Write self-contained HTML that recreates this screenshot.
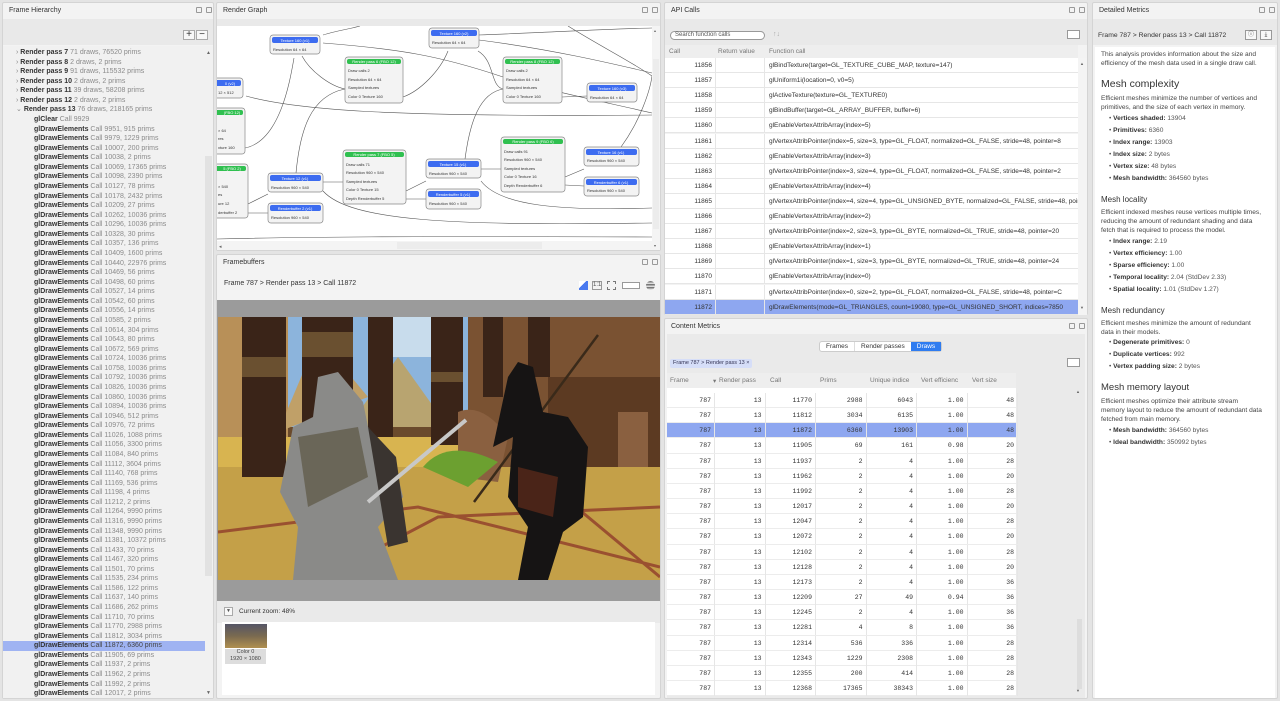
<!DOCTYPE html>
<html><head><meta charset="utf-8"><style>
*{box-sizing:border-box;margin:0;padding:0}
body{width:1280px;height:701px;background:#e4e4e4;font-family:"Liberation Sans",sans-serif;font-size:7px;color:#333;position:relative;overflow:hidden}
.p{position:absolute;background:#f3f3f3;border:1px solid #d4d4d4;border-radius:2px}
.t{position:absolute;left:6px;top:4px;font-size:7px;color:#333}
.ic{position:absolute;top:4px;width:6px;height:6px;border:1px solid #999;border-radius:1px}
.a{position:absolute;white-space:nowrap}
.fh{position:absolute;left:0;width:200px;height:9.57px;line-height:9.57px;font-size:7px;white-space:nowrap}
.fh b{color:#333}
.fh span{color:#8a8a8a}
.row{position:absolute;left:0;height:15.1px;line-height:15px;border-bottom:1px solid #e6e6e6;background:#fff;font-size:6.5px}
.mono{font-family:"Liberation Mono",monospace;font-size:6.5px}
.cm{position:absolute;left:2px;width:349px;height:15.16px;line-height:15px;border-bottom:1px solid #ececec;background:#fff}
.cm i{position:absolute;font-style:normal;text-align:right;top:0}
.dm{position:absolute;left:6px;font-size:6.6px;color:#444;white-space:nowrap;line-height:9px}
.h{position:absolute;left:6px;font-size:10.5px;color:#333;white-space:nowrap}
.h2{position:absolute;left:6px;font-size:8px;color:#333;white-space:nowrap}
.bl{position:absolute;left:14px;font-size:6.6px;color:#555;white-space:nowrap}
.bl b{color:#333}
</style></head><body>

<!-- Frame Hierarchy -->
<div class="p" style="left:2px;top:2px;width:212px;height:697px">
<div class="t">Frame Hierarchy</div>
<div class="ic" style="left:193px"></div><div class="ic" style="left:203px"></div>
<div style="position:absolute;left:0;top:16px;width:210px;height:26px;background:#e9e9e9"></div>
<div style="position:absolute;left:180px;top:27px;width:12px;height:10px;border:1px solid #aaa;background:#f8f8f8;font-size:10px;line-height:8px;text-align:center">+</div>
<div style="position:absolute;left:193px;top:27px;width:12px;height:10px;border:1px solid #aaa;background:#f8f8f8;font-size:10px;line-height:8px;text-align:center">−</div>
<div style="position:absolute;left:0;top:43px;width:210px;height:652px;background:#f1f1f1">
<div style="position:absolute;left:202px;top:110px;width:7px;height:420px;background:#e2e2e2"></div>
<div style="position:absolute;left:203px;top:4px;font-size:5px;color:#666">▲</div>
<div style="position:absolute;left:203px;top:644px;font-size:5px;color:#666">▼</div>
</div>
<div id="fh" style="position:absolute;left:0;top:45px;width:210px"></div>
</div>

<!-- Render Graph -->
<div class="p" style="left:216px;top:2px;width:445px;height:249px">
<div class="t">Render Graph</div>
<div class="ic" style="left:425px"></div><div class="ic" style="left:435px"></div>
<div style="position:absolute;left:0;top:16px;width:443px;height:8px;background:#e9e9e9"></div>
<svg style="position:absolute;left:0;top:23px" width="443" height="224" viewBox="217 25 443 224" font-family="Liberation Sans" font-size="4.5">
<rect x="217" y="25" width="443" height="224" fill="#fff"/>
<g fill="none" stroke="#555" stroke-width="0.6">
<path d="M323 34 C335 30,350 28,360 25"/>
<path d="M323 42 C400 48,440 55,500 75 C540 88,600 100,652 112"/>
<path d="M302 55 C310 70,330 85,345 88"/>
<path d="M403 96 C420 90,440 70,448 50"/>
<path d="M478 34 C540 32,600 28,652 27"/>
<path d="M479 39 C550 48,610 62,652 72"/>
<path d="M478 50 C495 60,490 85,503 88"/>
<path d="M562 96 L587 95"/>
<path d="M246 95 C300 110,400 116,652 114"/>
<path d="M245 147 C280 140,290 80,294 57"/>
<path d="M296 172 C300 130,310 95,345 88"/>
<path d="M465 158 C470 120,480 92,503 88"/>
<path d="M248 203 L268 193"/>
<path d="M248 212 L268 212"/>
<path d="M323 181 L343 181"/>
<path d="M406 190 L426 180"/>
<path d="M406 198 L426 198"/>
<path d="M481 168 L501 168"/>
<path d="M565 176 L584 168"/>
<path d="M565 184 L584 185"/>
<path d="M621 146 C640 120,650 90,652 75"/>
<path d="M323 190 C350 220,450 225,652 222"/>
<path d="M481 180 C500 205,560 210,652 207"/>
<path d="M217 238 C300 236,400 235,652 236"/>
<path d="M568 25 C600 45,630 60,652 75"/>
</g>
<g fill="#f3f3f3" stroke="#888" stroke-width="0.7">
<rect x="270" y="34" width="50" height="19" rx="3"/><rect x="345" y="56" width="58" height="46" rx="3"/>
<rect x="429" y="27" width="50" height="20" rx="3"/><rect x="503" y="56" width="59" height="46" rx="3"/>
<rect x="587" y="82" width="50" height="19" rx="3"/><rect x="210" y="77" width="33" height="20" rx="3"/>
<rect x="210" y="107" width="35" height="46" rx="3"/><rect x="210" y="163" width="38" height="54" rx="3"/>
<rect x="268" y="172" width="55" height="19" rx="3"/><rect x="268" y="202" width="55" height="20" rx="3"/>
<rect x="343" y="149" width="63" height="54" rx="3"/><rect x="426" y="158" width="55" height="19" rx="3"/>
<rect x="426" y="188" width="55" height="20" rx="3"/><rect x="501" y="136" width="64" height="55" rx="3"/>
<rect x="584" y="146" width="55" height="19" rx="3"/><rect x="584" y="176" width="55" height="19" rx="3"/>
</g>
<g fill="#3d6cf0"><rect x="272" y="36" width="46" height="6" rx="2"/><rect x="431" y="29" width="46" height="6" rx="2"/>
<rect x="589" y="84" width="46" height="6" rx="2"/><rect x="210" y="79" width="31" height="6" rx="2"/>
<rect x="270" y="174" width="51" height="6" rx="2"/><rect x="270" y="204" width="51" height="6" rx="2"/>
<rect x="428" y="160" width="51" height="6" rx="2"/><rect x="428" y="190" width="51" height="6" rx="2"/>
<rect x="586" y="148" width="51" height="6" rx="2"/><rect x="586" y="178" width="51" height="6" rx="2"/></g>
<g fill="#30c050"><rect x="347" y="58" width="54" height="5" rx="2"/><rect x="505" y="58" width="55" height="5" rx="2"/>
<rect x="210" y="109" width="33" height="5" rx="2"/><rect x="210" y="165" width="36" height="5" rx="2"/>
<rect x="345" y="151" width="59" height="5" rx="2"/><rect x="503" y="138" width="60" height="5" rx="2"/></g>
<g fill="#fff" font-size="4" text-anchor="middle">
<text x="295" y="41">Texture 160 (v1)</text><text x="454" y="34">Texture 160 (v2)</text><text x="612" y="89">Texture 160 (v3)</text>
<text x="295" y="179">Texture 12 (v1)</text><text x="295" y="209">Renderbuffer 2 (v1)</text>
<text x="453" y="165">Texture 15 (v1)</text><text x="453" y="195">Renderbuffer 5 (v1)</text>
<text x="611" y="153">Texture 16 (v1)</text><text x="611" y="183">Renderbuffer 6 (v1)</text>
<text x="374" y="62">Render pass 6 (FBO 12)</text><text x="532" y="62">Render pass 8 (FBO 12)</text>
<text x="374" y="155">Render pass 7 (FBO 5)</text><text x="533" y="142">Render pass 9 (FBO 6)</text>
<text x="230" y="84">0 (v2)</text><text x="232" y="113">(FBO 12)</text><text x="232" y="169">5 (FBO 2)</text></g>
<g fill="#333" font-size="4">
<text x="273" y="50">Resolution  64 × 64</text><text x="432" y="43">Resolution  64 × 64</text><text x="590" y="98">Resolution  64 × 64</text>
<text x="271" y="188">Resolution  960 × 540</text><text x="271" y="218">Resolution  960 × 540</text>
<text x="429" y="174">Resolution  960 × 540</text><text x="429" y="204">Resolution  960 × 540</text>
<text x="587" y="161">Resolution  960 × 540</text><text x="587" y="191">Resolution  960 × 540</text>
<text x="348" y="71">Draw calls   2</text><text x="348" y="80">Resolution  64 × 64</text><text x="348" y="88">Sampled textures</text><text x="348" y="97">Color 0      Texture 160</text>
<text x="506" y="71">Draw calls   2</text><text x="506" y="80">Resolution  64 × 64</text><text x="506" y="88">Sampled textures</text><text x="506" y="97">Color 0      Texture 160</text>
<text x="346" y="165">Draw calls   71</text><text x="346" y="173">Resolution  960 × 540</text><text x="346" y="182">Sampled textures</text><text x="346" y="190">Color 0      Texture 15</text><text x="346" y="199">Depth        Renderbuffer 5</text>
<text x="504" y="152">Draw calls   91</text><text x="504" y="160">Resolution  960 × 540</text><text x="504" y="169">Sampled textures</text><text x="504" y="177">Color 0      Texture 16</text><text x="504" y="186">Depth        Renderbuffer 6</text>
<text x="218" y="93">12 × 512</text><text x="218" y="131">× 64</text><text x="218" y="139">res</text><text x="218" y="148">xture 160</text>
<text x="218" y="187">× 540</text><text x="218" y="195">es</text><text x="218" y="204">ure 12</text><text x="218" y="213">derbuffer 2</text></g>
<rect x="652" y="25" width="8" height="215" fill="#f4f4f4"/><rect x="653" y="58" width="6" height="170" fill="#ececec"/>
<rect x="217" y="240" width="443" height="9" fill="#f4f4f4"/><rect x="397" y="241" width="145" height="7" fill="#ececec"/>
<text x="219" y="247" font-size="5" fill="#666">◂</text><text x="654" y="246" font-size="4" fill="#666">▾</text><text x="654" y="31" font-size="4" fill="#666">▴</text>
</svg>
</div>

<!-- Framebuffers -->
<div class="p" style="left:216px;top:254px;width:445px;height:445px">
<div class="t">Framebuffers</div>
<div class="ic" style="left:425px"></div><div class="ic" style="left:435px"></div>
<div class="a" style="left:7px;top:25px;font-size:7px;color:#333">Frame 787 &gt; Render pass 13 &gt; Call 11872</div>
<div class="a" style="left:362px;top:26px;width:9px;height:9px;background:linear-gradient(135deg,#fff 40%,#4a7af0 40%)"></div>
<div class="a" style="left:375px;top:26px;width:10px;height:9px;border:1px solid #999;font-size:6px;line-height:7px;text-align:center;color:#555">1:1</div>
<div class="a" style="left:390px;top:26px;width:9px;height:9px;border:1.5px dashed #777"></div>
<div class="a" style="left:405px;top:27px;width:18px;height:7px;border:1px solid #999;background:#fff"></div>
<div class="a" style="left:429px;top:26px;width:9px;height:9px;background:repeating-linear-gradient(#777 0 1.5px,#ddd 1.5px 3px);border-radius:50%"></div>
<div class="a" style="left:0;top:45px;width:443px;height:301px;background:#9b9b9b"></div>
<svg style="position:absolute;left:1px;top:62px" width="442" height="263" viewBox="0 0 442 263">
<rect width="442" height="263" fill="#6a4a2c"/>
<rect x="60" y="0" width="200" height="110" fill="#8cb4dc"/>
<rect x="150" y="0" width="80" height="40" fill="#c8dcec"/>
<path d="M0 0 H70 V120 H0 Z" fill="#b89058"/>
<path d="M60 115 L100 20 L150 80 Z" fill="#c0a068"/><path d="M130 110 L180 40 L230 110 Z" fill="#b8a470"/>
<rect x="250" y="0" width="192" height="175" fill="#7a5232"/>
<rect x="330" y="60" width="112" height="110" fill="#5c3a22"/><rect x="400" y="95" width="30" height="80" fill="#8a6040"/>
<rect x="0" y="120" width="250" height="40" fill="#d8b450"/>
<rect x="0" y="150" width="442" height="113" fill="#c4a048"/>
<path d="M0 215 L200 190 L442 250 M100 263 L220 200 L442 190 M340 175 L442 260" stroke="#9a5030" stroke-width="3" fill="none"/>
<g fill="#3a2418"><rect x="24" y="0" width="44" height="160"/><rect x="84" y="0" width="51" height="115"/><rect x="150" y="0" width="25" height="120"/><rect x="213" y="0" width="32" height="128"/><rect x="265" y="0" width="20" height="80"/><rect x="310" y="0" width="22" height="60"/></g>
<g fill="#6a5030"><rect x="24" y="40" width="44" height="20"/><rect x="84" y="15" width="51" height="25"/><rect x="213" y="55" width="32" height="10"/></g>
<path d="M240 95 Q265 85 290 120 L280 165 L240 160 Z" fill="#8a6040"/>
<path d="M205 150 Q230 120 280 145 L250 170 Z" fill="#6ca030"/>
<path d="M62 175 L75 110 L95 100 L100 60 L120 55 L145 85 L150 110 L175 140 L185 180 L160 210 L180 263 L75 263 L80 210 Z" fill="#8a8a88"/>
<path d="M80 120 L140 110 L150 160 L90 190 Z" fill="#6a6658"/>
<path d="M150 110 L178 140 L190 225 L170 230 Z" fill="#3a3430"/>
<path d="M150 185 L248 103" stroke="#c8c8c8" stroke-width="4"/>
<path d="M256 185 L380 18" stroke="#3a2a1a" stroke-width="2.5"/>
<path d="M290 60 L300 45 L315 50 L325 95 L350 100 L370 130 L365 200 L345 215 L330 263 L300 263 L310 210 L290 180 L295 120 L275 130 Z" fill="#161414"/>
<path d="M300 150 L340 160 L335 200 L300 190 Z" fill="#4a2418"/>
</svg>
<div class="a" style="left:0;top:346px;width:443px;height:22px;background:#eaeaea"></div>
<div class="a" style="left:7px;top:352px;width:9px;height:9px;border:1px solid #aaa;background:#f8f8f8;font-size:5px;text-align:center;line-height:7px;color:#555">▼</div>
<div class="a" style="left:22px;top:353px;font-size:6.5px">Current zoom: 48%</div>
<div class="a" style="left:5px;top:367px;width:433px;height:73px;background:#fff"></div>
<div class="a" style="left:8px;top:369px;width:42px;height:24px;background:linear-gradient(180deg,#556 0%,#7a6a50 50%,#b09050 100%)"></div>
<div class="a" style="left:8px;top:394px;width:41px;height:15px;background:#ddd;font-size:5.5px;text-align:center;line-height:7px;color:#444">Color 0<br>1920 × 1080</div>
</div>

<!-- API Calls -->
<div class="p" style="left:664px;top:2px;width:424px;height:313px">
<div class="t">API Calls</div>
<div class="ic" style="left:404px"></div><div class="ic" style="left:414px"></div>
<div style="position:absolute;left:0;top:16px;width:422px;height:26px;background:#e9e9e9"></div>
<div class="a" style="left:5px;top:28px;width:95px;height:9px;border:1px solid #999;border-radius:5px;background:#fff;font-size:6px;line-height:7px;padding-left:4px;color:#555">Search function calls</div>
<div class="a" style="left:108px;top:28px;font-size:7px;color:#aaa">↑↓</div>
<div class="a" style="left:402px;top:27px;width:13px;height:9px;border:1px solid #999;background:#fff"></div>
<div class="a" style="left:0;top:42px;width:413px;height:13px;background:#eee;font-size:6.5px;color:#777">
<span class="a" style="left:4px;top:3px">Call</span><span class="a" style="left:53px;top:3px">Return value</span><span class="a" style="left:104px;top:3px">Function call</span></div>
<div id="api" style="position:absolute;left:0;top:55px;width:413px;height:257px;overflow:hidden"></div>
<div class="a" style="left:413px;top:55px;width:9px;height:257px;background:#f4f4f4"></div>
<div class="a" style="left:415px;top:58px;font-size:4px;color:#666">▲</div><div class="a" style="left:415px;top:302px;font-size:4px;color:#666">▼</div>
</div>

<!-- Content Metrics -->
<div class="p" style="left:664px;top:318px;width:424px;height:381px">
<div class="t">Content Metrics</div>
<div class="ic" style="left:404px"></div><div class="ic" style="left:414px"></div>
<div class="a" style="left:2px;top:15px;width:418px;height:364px;background:#eaeaea"></div>
<div class="a" style="left:154px;top:22px;height:11px;border:1px solid #ccc;border-radius:3px;background:#fff;font-size:6.5px;line-height:9px;display:flex">
<span style="padding:0 6px">Frames</span><span style="padding:0 6px;border-left:1px solid #ddd">Render passes</span><span style="padding:0 6px;background:#2f7cf0;color:#fff">Draws</span></div>
<div class="a" style="left:5px;top:40px;height:9px;background:#d6def8;border-radius:2px;font-size:5.5px;line-height:9px;padding:0 3px;color:#335">Frame 787 &gt; Render pass 13 ×</div>
<div class="a" style="left:402px;top:39px;width:13px;height:9px;border:1px solid #999;background:#fff"></div>
<div class="a" style="left:2px;top:54px;width:349px;height:15px;background:#eee;font-size:6.5px;color:#777">
<span class="a" style="left:3px;top:4px">Frame</span><span class="a" style="left:46px;top:4px">▾</span><span class="a" style="left:52px;top:4px">Render pass</span><span class="a" style="left:103px;top:4px">Call</span><span class="a" style="left:153px;top:4px">Prims</span><span class="a" style="left:203px;top:4px">Unique indice</span><span class="a" style="left:254px;top:4px">Vert efficienc</span><span class="a" style="left:305px;top:4px">Vert size</span></div>
<div class="a" style="left:2px;top:69px;width:349px;height:6px;background:#fff"></div>
<div id="cm" style="position:absolute;left:0;top:74px"></div>
<div class="a" style="left:411px;top:70px;font-size:4px;color:#666">▲</div><div class="a" style="left:411px;top:369px;font-size:4px;color:#666">▼</div>
<div class="a" style="left:412px;top:300px;width:5px;height:70px;background:#ddd"></div>
</div>

<!-- Detailed Metrics -->
<div class="p" style="left:1092px;top:2px;width:186px;height:697px">
<div class="t">Detailed Metrics</div>
<div class="ic" style="left:166px"></div><div class="ic" style="left:176px"></div>
<div style="position:absolute;left:0;top:16px;width:184px;height:26px;background:#e9e9e9"></div>
<div class="a" style="left:5px;top:29px;font-size:6.8px">Frame 787 &gt; Render pass 13 &gt; Call 11872</div>
<div class="a" style="left:152px;top:27px;width:12px;height:10px;border:1px solid #999;background:#f8f8f8;font-size:6px;text-align:center;line-height:8px">ⓘ</div>
<div class="a" style="left:167px;top:27px;width:12px;height:10px;border:1px solid #999;background:#f8f8f8;font-size:6px;text-align:center;line-height:8px">⤓</div>
<div style="position:absolute;left:2px;top:44px;width:180px;height:651px;background:#fff">
<div class="dm" style="top:3px">This analysis provides information about the size and<br>efficiency of the mesh data used in a single draw call.</div>
<div class="h" style="top:31px">Mesh complexity</div>
<div class="dm" style="top:47px">Efficient meshes minimize the number of vertices and<br>primitives, and the size of each vertex in memory.</div>
<div class="bl" style="top:68px">• <b>Vertices shaded:</b> 13904</div>
<div class="bl" style="top:80px">• <b>Primitives:</b> 6360</div>
<div class="bl" style="top:92px">• <b>Index range:</b> 13903</div>
<div class="bl" style="top:104px">• <b>Index size:</b> 2 bytes</div>
<div class="bl" style="top:116px">• <b>Vertex size:</b> 48 bytes</div>
<div class="bl" style="top:128px">• <b>Mesh bandwidth:</b> 364560 bytes</div>
<div class="h2" style="top:148px">Mesh locality</div>
<div class="dm" style="top:161px">Efficient indexed meshes reuse vertices multiple times,<br>reducing the amount of redundant shading and data<br>fetch that is required to process the model.</div>
<div class="bl" style="top:191px">• <b>Index range:</b> 2.19</div>
<div class="bl" style="top:203px">• <b>Vertex efficiency:</b> 1.00</div>
<div class="bl" style="top:215px">• <b>Sparse efficiency:</b> 1.00</div>
<div class="bl" style="top:227px">• <b>Temporal locality:</b> 2.04 (StdDev 2.33)</div>
<div class="bl" style="top:239px">• <b>Spatial locality:</b> 1.01 (StdDev 1.27)</div>
<div class="h2" style="top:259px">Mesh redundancy</div>
<div class="dm" style="top:272px">Efficient meshes minimize the amount of redundant<br>data in their models.</div>
<div class="bl" style="top:292px">• <b>Degenerate primitives:</b> 0</div>
<div class="bl" style="top:304px">• <b>Duplicate vertices:</b> 992</div>
<div class="bl" style="top:316px">• <b>Vertex padding size:</b> 2 bytes</div>
<div class="h" style="top:335px;font-size:9.5px">Mesh memory layout</div>
<div class="dm" style="top:350px">Efficient meshes optimize their attribute stream<br>memory layout to reduce the amount of redundant data<br>fetched from main memory.</div>
<div class="bl" style="top:380px">• <b>Mesh bandwidth:</b> 364560 bytes</div>
<div class="bl" style="top:392px">• <b>Ideal bandwidth:</b> 350992 bytes</div>
</div>
</div>

<script>
var fh=document.getElementById('fh'),h='';
var rp=[['7','71 draws, 76520 prims'],['8','2 draws, 2 prims'],['9','91 draws, 115532 prims'],['10','2 draws, 2 prims'],['11','39 draws, 58208 prims'],['12','2 draws, 2 prims'],['13','76 draws, 218165 prims']];
var y=0;
rp.forEach(function(r,i){h+='<div class="fh" style="top:'+y+'px;left:13px"><span>'+(i==6?'⌄':'›')+'</span> <b>Render pass '+r[0]+'</b> <span>'+r[1]+'</span></div>';y+=9.57;});
h+='<div class="fh" style="top:'+y+'px;left:31px"><b>glClear</b> <span>Call 9929</span></div>';y+=9.57;
var d=[[9951,915],[9979,1229],[10007,200],[10038,2],[10069,17365],[10098,2390],[10127,78],[10178,2432],[10209,27],[10262,10036],[10296,10036],[10328,30],[10357,136],[10409,1600],[10440,22976],[10469,56],[10498,60],[10527,14],[10542,60],[10556,14],[10585,2],[10614,304],[10643,80],[10672,569],[10724,10036],[10758,10036],[10792,10036],[10826,10036],[10860,10036],[10894,10036],[10946,512],[10976,72],[11026,1088],[11056,3300],[11084,840],[11112,3604],[11140,768],[11169,536],[11198,4],[11212,2],[11264,9990],[11316,9990],[11348,9990],[11381,10372],[11433,70],[11467,320],[11501,70],[11535,234],[11586,122],[11637,140],[11686,262],[11710,70],[11770,2988],[11812,3034],[11872,6360],[11905,69],[11937,2],[11962,2],[11992,2],[12017,2]];
d.forEach(function(r){var s=r[0]==11872;h+='<div class="fh" style="top:'+y+'px;left:0;width:202px;padding-left:31px;'+(s?'background:#9fb3f2':'')+'"><b>glDrawElements</b> <span'+(s?' style="color:#444"':'')+'>Call '+r[0]+', '+r[1]+' prims</span></div>';y+=9.57;});
fh.innerHTML=h;
var api=[[11856,'glBindTexture(target=GL_TEXTURE_CUBE_MAP, texture=147)'],[11857,'glUniform1i(location=0, v0=5)'],[11858,'glActiveTexture(texture=GL_TEXTURE0)'],[11859,'glBindBuffer(target=GL_ARRAY_BUFFER, buffer=6)'],[11860,'glEnableVertexAttribArray(index=5)'],[11861,'glVertexAttribPointer(index=5, size=3, type=GL_FLOAT, normalized=GL_FALSE, stride=48, pointer=8'],[11862,'glEnableVertexAttribArray(index=3)'],[11863,'glVertexAttribPointer(index=3, size=4, type=GL_FLOAT, normalized=GL_FALSE, stride=48, pointer=2'],[11864,'glEnableVertexAttribArray(index=4)'],[11865,'glVertexAttribPointer(index=4, size=4, type=GL_UNSIGNED_BYTE, normalized=GL_FALSE, stride=48, pointer=4'],[11866,'glEnableVertexAttribArray(index=2)'],[11867,'glVertexAttribPointer(index=2, size=3, type=GL_BYTE, normalized=GL_TRUE, stride=48, pointer=20'],[11868,'glEnableVertexAttribArray(index=1)'],[11869,'glVertexAttribPointer(index=1, size=3, type=GL_BYTE, normalized=GL_TRUE, stride=48, pointer=24'],[11870,'glEnableVertexAttribArray(index=0)'],[11871,'glVertexAttribPointer(index=0, size=2, type=GL_FLOAT, normalized=GL_FALSE, stride=48, pointer=C'],[11872,'glDrawElements(mode=GL_TRIANGLES, count=19080, type=GL_UNSIGNED_SHORT, indices=7850']];
h='';api.forEach(function(r,i){var s=r[0]==11872,bg=s?'#8ea7f0':'#fff';h+='<div class="row" style="top:'+(i*15.1)+'px;width:413px;background:'+bg+'"><span class="a" style="left:2px;width:45px;text-align:right">'+r[0]+'</span><span class="a" style="left:50px;width:50px;height:15px;border-left:1px solid #e6e6e6;border-right:1px solid #e6e6e6"></span><span class="a" style="left:104px">'+r[1]+'</span></div>';});
document.getElementById('api').innerHTML=h;
var cm=[[11770,2988,6043,'1.00',48],[11812,3034,6135,'1.00',48],[11872,6360,13903,'1.00',48],[11905,69,161,'0.98',20],[11937,2,4,'1.00',28],[11962,2,4,'1.00',20],[11992,2,4,'1.00',28],[12017,2,4,'1.00',20],[12047,2,4,'1.00',28],[12072,2,4,'1.00',20],[12102,2,4,'1.00',28],[12128,2,4,'1.00',20],[12173,2,4,'1.00',36],[12209,27,49,'0.94',36],[12245,2,4,'1.00',36],[12281,4,8,'1.00',36],[12314,536,336,'1.00',28],[12343,1229,2308,'1.00',28],[12355,200,414,'1.00',28],[12368,17365,38343,'1.00',28]];
h='';cm.forEach(function(r,i){var s=r[0]==11872;var v=['787','13',r[0],r[1],r[2],r[3],r[4]];h+='<div class="cm mono" style="top:'+(i*15.16)+'px;'+(s?'background:#8ea7f0':'')+'">';v.forEach(function(x,j){h+='<i style="left:'+(j*50.5)+'px;width:48px;border-right:1px solid #e6e6e6;padding-right:3px">'+x+'</i>';});h+='</div>';});
document.getElementById('cm').innerHTML=h;
</script>
</body></html>
